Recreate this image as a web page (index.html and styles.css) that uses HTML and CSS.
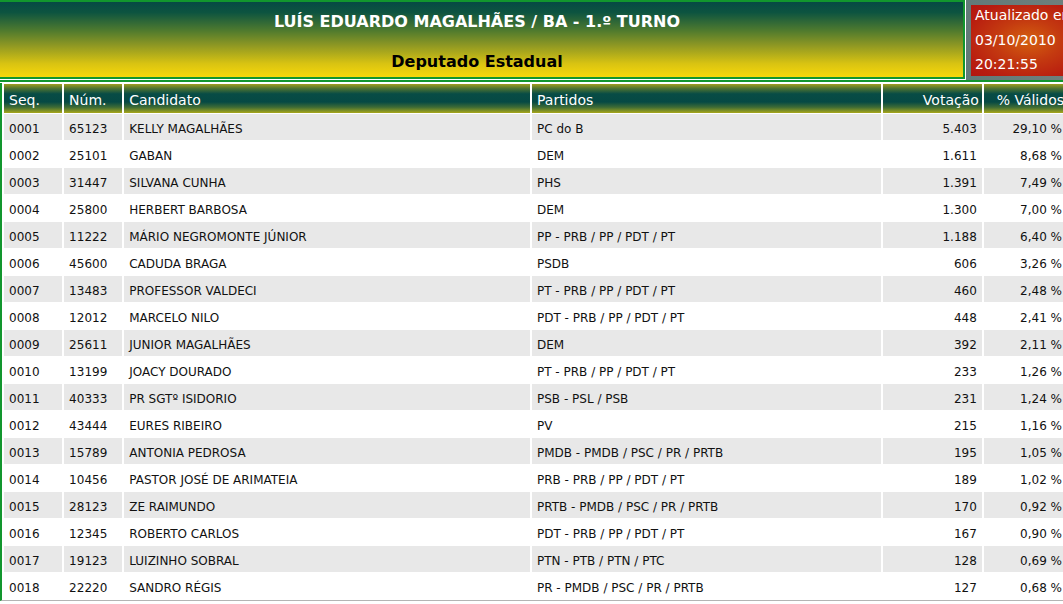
FILE: index.html
```html
<!DOCTYPE html>
<html lang="pt-BR">
<head>
<meta charset="utf-8">
<title>Apuração - Deputado Estadual</title>
<link rel="stylesheet" href="styles.css">
</head>
<body>
<div class="page">
  <div class="top">
    <div class="title-wrap">
      <div class="title">
        <div class="title-main">LUÍS EDUARDO MAGALHÃES / BA - 1.º TURNO</div>
        <div class="title-sub">Deputado Estadual</div>
      </div>
    </div>
    <div class="upd-area">
      <div class="upd-box">
        <div class="upd-lines">
          <div>Atualizado em</div>
          <div>03/10/2010</div>
          <div>20:21:55</div>
        </div>
      </div>
    </div>
  </div>
  <table class="results">
    <colgroup>
      <col class="c-seq"><col class="c-num"><col class="c-cand"><col class="c-part"><col class="c-vot"><col class="c-pct">
    </colgroup>
    <thead>
      <tr><th>Seq.</th><th>Núm.</th><th>Candidato</th><th>Partidos</th><th class="r">Votação</th><th class="r pct-h">% Válidos</th></tr>
    </thead>
    <tbody>
      <tr><td>0001</td><td>65123</td><td>KELLY MAGALHÃES</td><td>PC do B</td><td class="r">5.403</td><td class="r">29,10 %</td></tr>
      <tr><td>0002</td><td>25101</td><td>GABAN</td><td>DEM</td><td class="r">1.611</td><td class="r">8,68 %</td></tr>
      <tr><td>0003</td><td>31447</td><td>SILVANA CUNHA</td><td>PHS</td><td class="r">1.391</td><td class="r">7,49 %</td></tr>
      <tr><td>0004</td><td>25800</td><td>HERBERT BARBOSA</td><td>DEM</td><td class="r">1.300</td><td class="r">7,00 %</td></tr>
      <tr><td>0005</td><td>11222</td><td>MÁRIO NEGROMONTE JÚNIOR</td><td>PP - PRB / PP / PDT / PT</td><td class="r">1.188</td><td class="r">6,40 %</td></tr>
      <tr><td>0006</td><td>45600</td><td>CADUDA BRAGA</td><td>PSDB</td><td class="r">606</td><td class="r">3,26 %</td></tr>
      <tr><td>0007</td><td>13483</td><td>PROFESSOR VALDECI</td><td>PT - PRB / PP / PDT / PT</td><td class="r">460</td><td class="r">2,48 %</td></tr>
      <tr><td>0008</td><td>12012</td><td>MARCELO NILO</td><td>PDT - PRB / PP / PDT / PT</td><td class="r">448</td><td class="r">2,41 %</td></tr>
      <tr><td>0009</td><td>25611</td><td>JUNIOR MAGALHÃES</td><td>DEM</td><td class="r">392</td><td class="r">2,11 %</td></tr>
      <tr><td>0010</td><td>13199</td><td>JOACY DOURADO</td><td>PT - PRB / PP / PDT / PT</td><td class="r">233</td><td class="r">1,26 %</td></tr>
      <tr><td>0011</td><td>40333</td><td>PR SGTº ISIDORIO</td><td>PSB - PSL / PSB</td><td class="r">231</td><td class="r">1,24 %</td></tr>
      <tr><td>0012</td><td>43444</td><td>EURES RIBEIRO</td><td>PV</td><td class="r">215</td><td class="r">1,16 %</td></tr>
      <tr><td>0013</td><td>15789</td><td>ANTONIA PEDROSA</td><td>PMDB - PMDB / PSC / PR / PRTB</td><td class="r">195</td><td class="r">1,05 %</td></tr>
      <tr><td>0014</td><td>10456</td><td>PASTOR JOSÉ DE ARIMATEIA</td><td>PRB - PRB / PP / PDT / PT</td><td class="r">189</td><td class="r">1,02 %</td></tr>
      <tr><td>0015</td><td>28123</td><td>ZE RAIMUNDO</td><td>PRTB - PMDB / PSC / PR / PRTB</td><td class="r">170</td><td class="r">0,92 %</td></tr>
      <tr><td>0016</td><td>12345</td><td>ROBERTO CARLOS</td><td>PDT - PRB / PP / PDT / PT</td><td class="r">167</td><td class="r">0,90 %</td></tr>
      <tr><td>0017</td><td>19123</td><td>LUIZINHO SOBRAL</td><td>PTN - PTB / PTN / PTC</td><td class="r">128</td><td class="r">0,69 %</td></tr>
      <tr><td>0018</td><td>22220</td><td>SANDRO RÉGIS</td><td>PR - PMDB / PSC / PR / PRTB</td><td class="r">127</td><td class="r">0,68 %</td></tr>
    </tbody>
  </table>
</div>
</body>
</html>
```
FILE: styles.css
```css
html, body {
  margin: 0;
  padding: 0;
  background: #ffffff;
  overflow: hidden;
}

.page {
  width: 1069px;
  font-family: "DejaVu Sans", Verdana, sans-serif;
}

.top {
  display: flex;
  height: 80px;
  border-bottom: 2px solid #12962e;
  background: radial-gradient(circle at 10% 10%, #17585a 0%, #2b6664 45%, #6f7f7d 100%);
}

.title-wrap {
  width: 966px;
  flex: none;
  border-right: 1px solid #ffffff;
  border-bottom: 1px solid #ffffff;
  box-sizing: border-box;
}

.title {
  height: 79px;
  box-sizing: border-box;
  border-top: 2px solid #12962e;
  border-bottom: 2px solid #12962e;
  border-right: 2px solid #12962e;
  padding: 10px 9px 0 0;
  background: linear-gradient(#064944 0%, #0d5440 14%, #4f7a2e 38%, #8f9823 58%, #d8c312 82%, #f8d80a 100%);
  text-align: center;
  font-weight: bold;
  font-size: 16px;
  line-height: 20px;
}

.title-main {
  color: #ffffff;
}

.title-sub {
  color: #000000;
  margin-top: 20px;
}

.upd-area {
  flex: 1;
  padding: 5px 0 4px 5px;
}

.upd-box {
  height: 71px;
  padding-left: 4px;
  background: radial-gradient(ellipse at 55% 50%, #d4600f 0%, #c43a10 40%, #b81c10 80%, #b3160f 100%);
  color: #ffffff;
  font-size: 14px;
  line-height: 24.5px;
  white-space: nowrap;
}

.upd-lines {
  position: relative;
  top: -2px;
}

.results {
  table-layout: fixed;
  width: 1069px;
  border-collapse: separate;
  border-spacing: 2px 1px;
  border-left: 2px solid #12962e;
  border-bottom: 1px solid #b4b4b4;
  margin-top: 1px;
  font-size: 12px;
  line-height: 16px;
  color: #111111;
}

.c-seq { width: 58px; }
.c-num { width: 58px; }
.c-cand { width: 405px; }
.c-part { width: 348px; }
.c-vot { width: 99px; }
.c-pct { width: 83px; }

.results th {
  height: 27px;
  padding: 2px 5px 0 5px;
  text-align: left;
  font-weight: normal;
  font-size: 14px;
  line-height: 18px;
  color: #ffffff;
  white-space: nowrap;
  overflow: hidden;
  background: linear-gradient(#a09d1f 0%, #4c7232 16%, #084c45 34%, #064944 62%, #3e6b35 80%, #a8a71b 100%);
}

.results th.r {
  text-align: right;
  padding-right: 3px;
}

.results th.pct-h {
  padding-right: 3px;
}

.results td {
  height: 23px;
  padding: 3px 5px 0 5px;
  white-space: nowrap;
  overflow: hidden;
}

.results td.r {
  text-align: right;
  padding-right: 5px;
}

.results tbody tr:nth-child(odd) td {
  background: #e8e8e8;
}

.results tbody tr:nth-child(even) td {
  background: #ffffff;
}
```
